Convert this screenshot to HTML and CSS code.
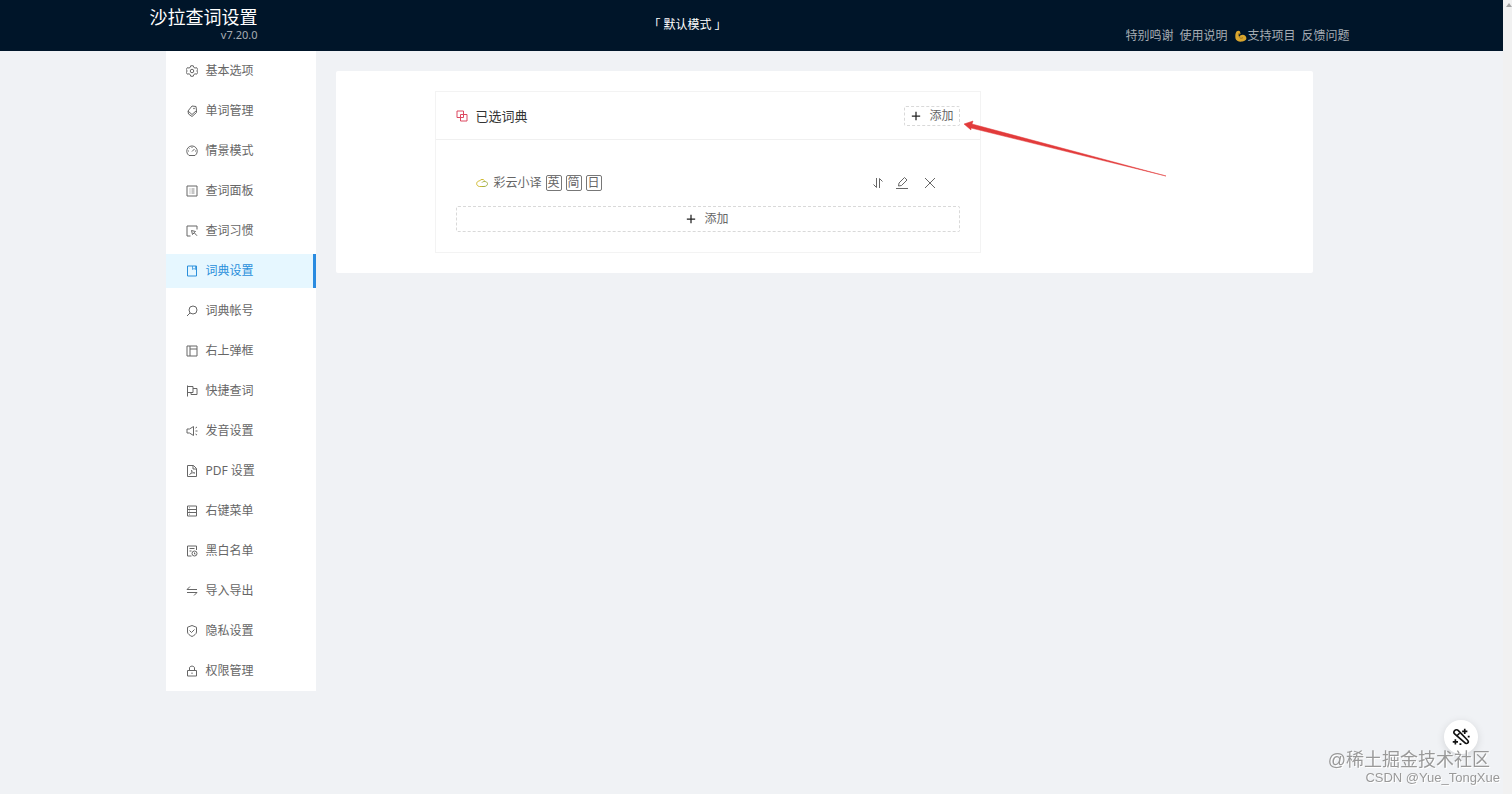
FILE: index.html
```html
<!DOCTYPE html>
<html lang="zh-CN">
  <head>
    <meta charset="UTF-8" />
    <meta name="viewport" content="width=device-width, initial-scale=1.0" />
    <title>沙拉查词设置</title>
    <link rel="stylesheet" href="styles.css">
  </head>
  <body>
    <div class="page">
      <header class="header">
        <div class="header-inner">
          <div class="brand">
            <h1 class="brand-title">沙拉查词设置</h1>
            <span class="brand-version">v7.20.0</span>
          </div>
          <div class="profile">「 默认模式 」</div>
          <nav class="head-links">
            <a href="#">特别鸣谢</a>
            <a href="#">使用说明</a>
            <a href="#" class="support"><svg class="muscle" viewBox="0 0 24 24"><path d="M3 3c2-2 6-2 7 0l1 5-4 1 1 5c3-5 9-6 13-2 4 5 1 10-6 11-7 1-13-1-14-6C0 11 1 6 3 3z" fill="#d9a62e"/><path d="M6 8l4-1M9 15c2 2 5 2 7 0" fill="none" stroke="#8a651c" stroke-width="1.5"/></svg>支持项目</a>
            <a href="#">反馈问题</a>
          </nav>
        </div>
      </header>

      <div class="layout">
        <nav class="sidebar">
          <a class="item" href="#"><svg class="icon" viewBox="0 0 24 24"><path d="M9.500 1.500h5l1 3.200 2.500 1.400 3.300-.8 2.400 4.200-2.300 2.500 2.300 2.400-2.400 4-3.300-.8-2.500 1.600-1 3.300h-5l-1-3.300L6 17.600l-3.300.8-2.400-4L2.600 12 .3 9.500l2.400-4.200 3.300.8 2.500-1.400z"/><circle cx="12" cy="12" r="3.500"/></svg>基本选项</a>
          <a class="item" href="#"><svg class="icon" viewBox="0 0 24 24"><path d="M12 2l8 1 1 8-9 8-8-7z"/><path d="M4 12l1 6 7 5 9-8v-4"/><circle cx="16" cy="7" r=".8"/></svg>单词管理</a>
          <a class="item" href="#"><svg class="icon" viewBox="0 0 24 24"><path d="M6 21a10.500 10.500 0 1 1 12 0z"/><path d="M12 13l5-5M12 4v2M4 12h2M18 12h2M6 6l1 1"/></svg>情景模式</a>
          <a class="item" href="#"><svg class="icon" viewBox="0 0 24 24"><path d="M2 2h20v20H2z"/><path d="M7 8h2M11 8h6M7 12h2M11 12h6M7 16h2M11 16h6" stroke-width="1.500"/></svg>查词面板</a>
          <a class="item" href="#"><svg class="icon" viewBox="0 0 24 24"><path d="M9 22H2V2h20v7"/><path d="M11 11l8 2-2.500 2.500 5.500 6M11 11l2 8 3.500-3.500"/></svg>查词习惯</a>
          <a class="item active" href="#"><svg class="icon" viewBox="0 0 24 24"><path d="M3 2h18v20H3z"/><path d="M13 2v7l3-2 3 2V2" stroke-width="1.500"/></svg>词典设置</a>
          <a class="item" href="#"><svg class="icon" viewBox="0 0 24 24"><circle cx="14" cy="10" r="8"/><path d="M8 16l-6 6"/></svg>词典帐号</a>
          <a class="item" href="#"><svg class="icon" viewBox="0 0 24 24"><path d="M2 2h20v20H2zM8 2v20M8 8h14"/></svg>右上弹框</a>
          <a class="item" href="#"><svg class="icon" viewBox="0 0 24 24"><path d="M3 1v22M3 3h11v12H3M14 7h8v12H10v-4"/></svg>快捷查词</a>
          <a class="item" href="#"><svg class="icon" viewBox="0 0 24 24"><path d="M2 8h5l8-5v18l-8-5H2zM19 12h4M19 6l3-2M19 18l3 2"/></svg>发音设置</a>
          <a class="item" href="#"><svg class="icon" viewBox="0 0 24 24"><path d="M3 1h12l6 6v16H3zM14 1v7h7"/><path d="M7 19c4-2 5-6 4-9 1 4 3 6 7 6-4-1-8 0-11 3z" stroke-width="1.500"/></svg>PDF 设置</a>
          <a class="item" href="#"><svg class="icon" viewBox="0 0 24 24"><path d="M3 2h18v20H3zM3 9h18M3 15h18"/><path d="M6 5.500h2M6 12h2M6 18.500h2" stroke-width="1.500"/></svg>右键菜单</a>
          <a class="item" href="#"><svg class="icon" viewBox="0 0 24 24"><path d="M11 22H3V2h18v8M7 7h10M7 12h4"/><circle cx="17" cy="17" r="5"/><path d="M17 15v3h2"/></svg>黑白名单</a>
          <a class="item" href="#"><svg class="icon" viewBox="0 0 24 24"><path d="M22 9H2l6-6M2 15h20l-6 6"/></svg>导入导出</a>
          <a class="item" href="#"><svg class="icon" viewBox="0 0 24 24"><path d="M12 1l9 3.500V14c0 4-5 7-9 9-4-2-9-5-9-9V4.500z"/><path d="M7 11l4 4 6-6"/></svg>隐私设置</a>
          <a class="item" href="#"><svg class="icon" viewBox="0 0 24 24"><path d="M3 11h18v11H3zM7 11V6c0-5 10-5 10 0v5M12 15v3"/></svg>权限管理</a>
        </nav>

        <main class="content">
          <section class="card">
            <div class="card-head">
              <svg class="icon icon-red" viewBox="0 0 24 24"><path d="M2 2h13v13H2zM9 9h13v13H9z"/></svg>
              <h2 class="card-title">已选词典</h2>
              <button class="add add-small" type="button"><svg class="plus" viewBox="0 0 12 12"><path d="M6 1v10M1 6h10"/></svg>添加</button>
            </div>
            <div class="card-body">
              <div class="dict">
                <svg class="icon icon-dict" viewBox="0 0 24 24"><path d="M13 19H7C-1 18 0 8 7 8c2-4 8-4 10-1" stroke="#d0b92c"/><path d="M12 11c2-3 10-3 11 2 0 4-3 6-7 6h-4" stroke="#a3b045"/></svg>
                <span class="dict-name">彩云小译</span>
                <span class="lang">英</span>
                <span class="lang">简</span>
                <span class="lang">日</span>
                <div class="actions">
                  <button class="action" type="button" aria-label="排序"><svg class="icon" viewBox="0 0 24 24"><path d="M9 2v19L3 15M15 22V3l6 6"/></svg></button>
                  <button class="action" type="button" aria-label="编辑"><svg class="icon" viewBox="0 0 24 24"><path d="M5 18l1-6L17 1l5 5-11 11zM0 23h24"/></svg></button>
                  <button class="action action-close" type="button" aria-label="删除"><svg class="icon" viewBox="0 0 24 24"><path d="M2 2l20 20M22 2L2 22"/></svg></button>
                </div>
              </div>
              <button class="add add-block" type="button"><svg class="plus" viewBox="0 0 12 12"><path d="M6 1v10M1 6h10"/></svg>添加</button>
            </div>
          </section>
          <svg class="arrow" viewBox="0 0 202 54"><path d="M0 2L9 -1 8 2 202 54 7 6 7 8z" fill="#e23b3b" stroke="#e23b3b" stroke-width=".5"/></svg>
        </main>
      </div>
    </div>

    <div class="scrollbar"></div>
    <button class="wand" type="button" aria-label="工具"><svg viewBox="0 0 24 24"><path d="M3.500 3.500c1.500-1.500 3.500-1.500 5 0l12 12.500c1.500 1.500 1.500 3 .5 4s-2.800 1-4-.5L3.500 8c-1.300-1.300-1.300-3 0-4.500zM7 10l3-3"/><path d="M17 1v7M13.500 4.500h7M4.500 15v7M1 18.500h7"/><path d="M21 11.500h2.500M10 21.500h2.500"/></svg></button>
    <div class="watermark">
      <span class="mark-site">@稀土掘金技术社区</span>
      <span class="mark-user">CSDN @Yue_TongXue</span>
    </div>
  </body>
</html>
```
FILE: styles.css
```css
* {
  box-sizing: border-box;
}

body {
  margin: 0;
  min-height: 100vh;
  background: #f0f2f5;
  color: #666666;
  font-family: "Noto Sans", "Noto Sans CJK SC", sans-serif;
  font-size: 12px;
  line-height: 18px;
}

a {
  color: inherit;
  text-decoration: none;
}

button {
  margin: 0;
  padding: 0;
  border: none;
  background: none;
  color: inherit;
  font: inherit;
  cursor: pointer;
}

.page {
  margin-right: 9px;
}

/* header */
.header {
  height: 51px;
  background: #001529;
}

.header-inner {
  display: grid;
  grid-template-columns: 1fr auto 1fr;
  max-width: 1204px;
  height: 100%;
  margin: 0 auto;
  padding-right: 4px;
}

.brand {
  display: flex;
  flex-direction: column;
  align-items: flex-end;
  justify-self: start;
  padding-top: 4px;
}

.brand-title {
  margin: 0;
  color: #ffffff;
  font-size: 18px;
  font-weight: 400;
  line-height: 26px;
}

.brand-version {
  color: #a6adb4;
  font-size: 11px;
  line-height: 10px;
}

.profile {
  margin-right: 124px;
  padding-top: 16px;
  color: #ffffff;
}

.head-links {
  display: flex;
  align-items: flex-start;
  gap: 6px;
  justify-self: end;
  padding-top: 27px;
  color: #a6adb4;
}

.support {
  display: flex;
  align-items: center;
  padding-left: 2px;
}

.muscle {
  width: 12px;
  height: 12px;
}

/* layout */
.layout {
  display: flex;
  align-items: flex-start;
  gap: 20px;
  max-width: 1204px;
  margin: 0 auto;
  padding: 0 41px 0 16px;
}

.sidebar {
  flex: 0 0 150px;
  background: #ffffff;
}

.item {
  display: flex;
  align-items: center;
  gap: 8px;
  height: 34px;
  margin: 3px 0 6px;
  padding-left: 20px;
}

.item + .item {
  margin-top: 0;
}

.item:last-child {
  margin-bottom: 3px;
}

.item.active {
  border-right: 3px solid #2a8be0;
  background: #e6f7ff;
  color: #2a8fdb;
}

.icon {
  flex: none;
  width: 12px;
  height: 12px;
  fill: none;
  stroke: currentColor;
  stroke-width: 2;
}

/* content */
.content {
  position: relative;
  flex: 1;
  margin-top: 20px;
  padding: 20px 99px;
  border-radius: 2px;
  background: #ffffff;
}

.card {
  max-width: 546px;
  border: 1px solid #f3f3f3;
}

.card-head {
  display: flex;
  align-items: center;
  gap: 8px;
  height: 48px;
  padding: 0 20px;
  border-bottom: 1px solid #f0f0f0;
}

.card-title {
  margin: 0;
  color: #333333;
  font-size: 13px;
  font-weight: 400;
}

.icon-red {
  color: #dc4860;
}

.add {
  display: flex;
  align-items: center;
  justify-content: center;
  gap: 8px;
  border: 1px dashed #d9d9d9;
  border-radius: 2px;
}

.plus {
  width: 10px;
  height: 10px;
  fill: none;
  stroke: #222222;
  stroke-width: 1.5;
}

.add-small {
  height: 20px;
  margin-left: auto;
  padding: 0 5px 0 6px;
}

.add-block {
  width: 100%;
  height: 26px;
}

.card-body {
  padding: 20px;
}

.dict {
  display: flex;
  align-items: center;
  gap: 4px;
  height: 46px;
  padding: 0 24px 0 20px;
}

.icon-dict {
  margin-right: 2px;
}

.lang {
  width: 16px;
  height: 16px;
  border: 1px solid #777777;
  border-radius: 2px;
  line-height: 14px;
  text-align: center;
}

.actions {
  display: flex;
  gap: 12px;
  margin-left: auto;
}

.action {
  display: flex;
}

.action-close {
  margin-left: 4px;
}

/* pointer drawn over the card */
.arrow {
  position: absolute;
  top: 51px;
  left: 628px;
  width: 202px;
  height: 54px;
  overflow: visible;
}

.scrollbar {
  position: fixed;
  top: 0;
  right: 0;
  bottom: 0;
  width: 9px;
  background: #f1f1f1;
}

.scrollbar::before {
  content: "";
  position: absolute;
  top: 3px;
  right: 0;
  border: 3px solid transparent;
  border-top: none;
  border-bottom: 4px solid #a3a3a3;
}

.wand {
  position: fixed;
  right: 34px;
  bottom: 40px;
  display: grid;
  place-items: center;
  width: 34px;
  height: 34px;
  border-radius: 50%;
  background: #ffffff;
  box-shadow: 0 2px 8px rgba(0, 0, 0, 0.12);
}

.wand svg {
  width: 18px;
  height: 18px;
  fill: none;
  stroke: #111111;
  stroke-width: 2.2;
}

.watermark {
  position: fixed;
  right: 12px;
  bottom: 7px;
  display: flex;
  flex-direction: column;
  align-items: flex-end;
  color: #999999;
  font-family: "Liberation Sans", "Noto Sans CJK SC", sans-serif;
  text-shadow: 1px 1px 0 #ffffff;
}

.mark-site {
  margin-right: 10px;
  font-size: 18px;
}

.mark-user {
  font-size: 13px;
  line-height: 18px;
}
```
